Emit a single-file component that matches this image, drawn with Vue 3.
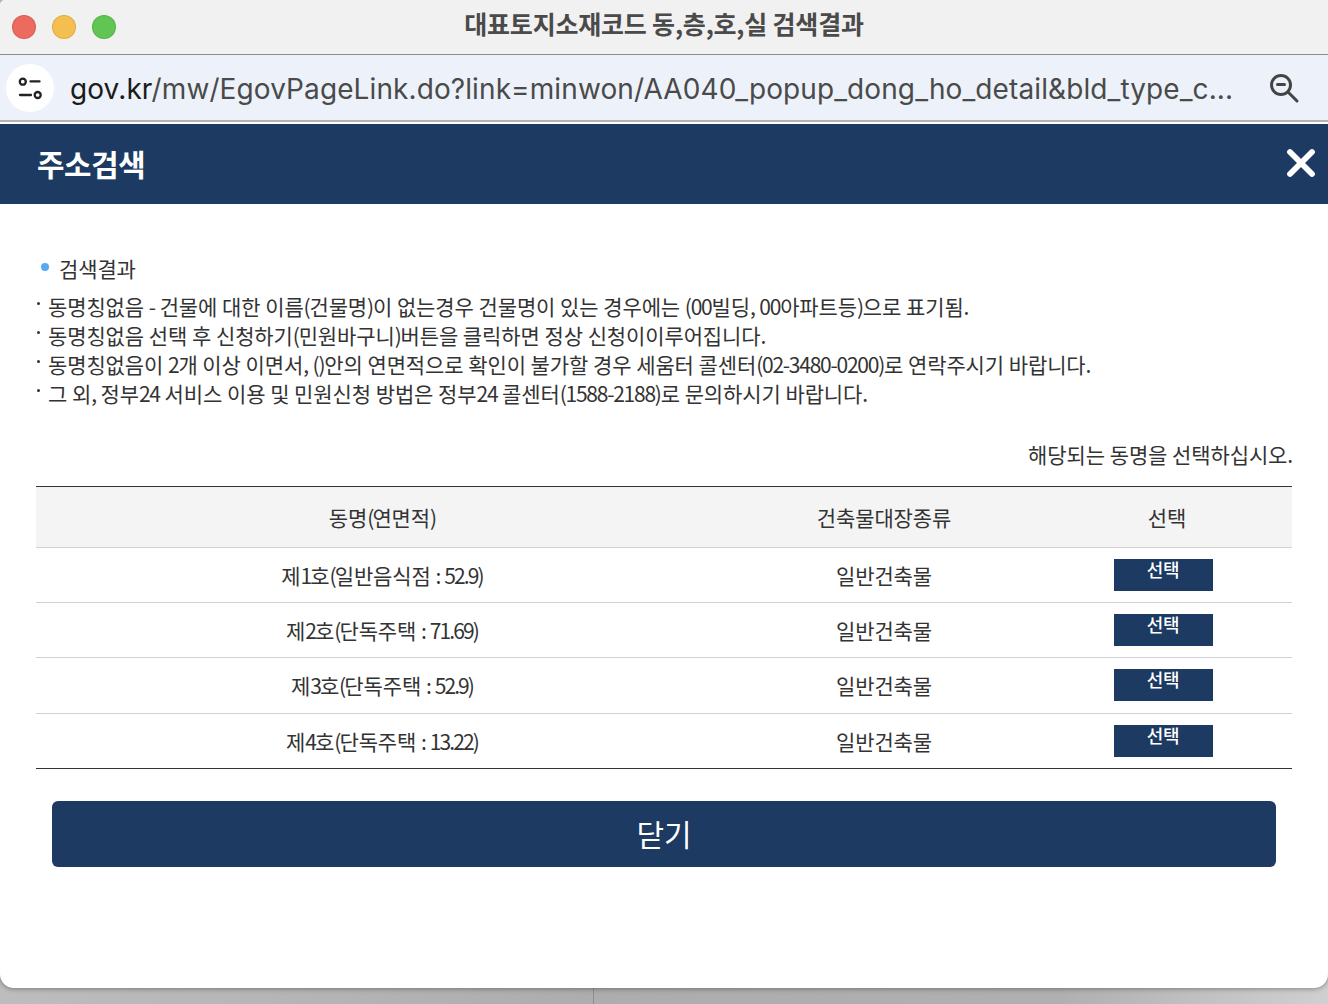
<script setup>
const notes = [
  '동명칭없음 - 건물에 대한 이름(건물명)이 없는경우 건물명이 있는 경우에는 (00빌딩, 00아파트등)으로 표기됨.',
  '동명칭없음 선택 후 신청하기(민원바구니)버튼을 클릭하면 정상 신청이이루어집니다.',
  '동명칭없음이 2개 이상 이면서, ()안의 연면적으로 확인이 불가할 경우 세움터 콜센터(02-3480-0200)로 연락주시기 바랍니다.',
  '그 외, 정부24 서비스 이용 및 민원신청 방법은 정부24 콜센터(1588-2188)로 문의하시기 바랍니다.',
]
const rows = [
  { name: '제1호(일반음식점 : 52.9)', kind: '일반건축물' },
  { name: '제2호(단독주택 : 71.69)', kind: '일반건축물' },
  { name: '제3호(단독주택 : 52.9)', kind: '일반건축물' },
  { name: '제4호(단독주택 : 13.22)', kind: '일반건축물' },
]
// Digits and punctuation are set tighter than Hangul in the original.
const runs = (text) =>
  text.match(/[!-~]+|[^!-~]+/g).map((t) => ({ t, narrow: /^[!-~]/.test(t) }))
</script>

<template>
  <div class="desk">
    <div class="window">
      <div class="titlebar">
        <div class="lights">
          <span class="light red"></span>
          <span class="light yellow"></span>
          <span class="light green"></span>
        </div>
        <div class="wintitle">대표토지소재코드 동,층,호,실 검색결과</div>
      </div>
      <div class="urlbar">
        <span class="tune">
          <svg width="28" height="28" viewBox="0 0 28 28" fill="none" stroke="#222" stroke-width="2.3" stroke-linecap="round">
            <circle cx="6.8" cy="7.7" r="3" />
            <path d="M14.5 7.4h9" />
            <path d="M4 21h11" />
            <circle cx="21.7" cy="21" r="3" />
          </svg>
        </span>
        <div class="url"><span class="host">gov.kr</span>/mw/EgovPageLink.do?link=minwon/AA040_popup_dong_ho_detail&amp;bld_type_c...</div>
        <svg class="zoomout" width="32" height="32" viewBox="0 0 32 32" fill="none" stroke="#444" stroke-width="3" stroke-linecap="round">
          <circle cx="13" cy="12" r="9.5" />
          <path d="M9.5 11.5h7" />
          <path d="M20 19l9 9" />
        </svg>
      </div>
      <div class="seam"></div>
      <header class="head">
        <h1>주소검색</h1>
        <svg class="close" width="30" height="30" viewBox="0 0 30 30" stroke="#fff" stroke-width="5.8" stroke-linecap="round">
          <path d="M4 4l22 22M26 4L4 26" />
        </svg>
      </header>
      <main class="body">
        <h2><i class="dot"></i>검색결과</h2>
        <ul class="notes">
          <li v-for="n in notes" :key="n"><span v-for="(p, i) in runs(n)" :key="i" :class="{ narrow: p.narrow }">{{ p.t }}</span></li>
        </ul>
        <p class="pick">해당되는 동명을 선택하십시오.</p>
        <div class="table">
          <div class="row th">
            <div class="c1"><span v-for="(p, i) in runs('동명(연면적)')" :key="i" :class="{ narrow: p.narrow }">{{ p.t }}</span></div>
            <div class="c2">건축물대장종류</div>
            <div class="c3 c3h">선택</div>
          </div>
          <div v-for="r in rows" :key="r.name" class="row td">
            <div class="c1"><span v-for="(p, i) in runs(r.name)" :key="i" :class="{ narrow: p.narrow }">{{ p.t }}</span></div>
            <div class="c2">{{ r.kind }}</div>
            <div class="c3"><button class="sel">선택</button></div>
          </div>
        </div>
        <button class="closebtn">닫기</button>
      </main>
    </div>
    <div class="below"><span class="divider"></span></div>
  </div>
</template>

<style scoped>
.desk {
  width: 1328px;
  height: 1004px;
  overflow: hidden;
  display: flex;
  flex-direction: column;
  background: linear-gradient(90deg, #bdbdbd 0%, #adadad 45%, #b0b0b0 80%, #d0d0d0 100%);
  font-family: "Noto Sans CJK KR", "Noto Sans", sans-serif;
  color: #333;
}
.window {
  position: relative;
  height: 988px;
  flex: none;
  background: #fff;
  border-radius: 5px 0 14px 14px;
  overflow: hidden;
  box-shadow: 0 1px 5px rgba(0, 0, 0, 0.35);
}
.below {
  flex: 1;
  display: flex;
  padding-left: 593px;
}
.divider {
  width: 1px;
  background: #8f8f8f;
}
.titlebar {
  height: 54px;
  display: flex;
  align-items: center;
  background: #f1f1f1;
  border-bottom: 1px solid #8d8d8d;
  position: relative;
}
.lights {
  display: flex;
  gap: 16px;
  padding-left: 12px;
}
.light {
  width: 24px;
  height: 24px;
  border-radius: 50%;
  box-sizing: border-box;
  border: 1px solid rgba(0, 0, 0, 0.1);
}
.red { background: #ed6a5e; }
.yellow { background: #f5bf4f; }
.green { background: #61c554; }
.wintitle {
  position: absolute;
  left: 0;
  right: 0;
  top: 6px;
  text-align: center;
  font-size: 25px;
  line-height: 34px;
  font-weight: 700;
  color: #4a4a4a;
  letter-spacing: -0.2px;
}
.urlbar {
  height: 65px;
  display: flex;
  align-items: center;
  background: #edf2fa;
  padding-left: 6px;
  font-family: "Inter", "Noto Sans", sans-serif;
}
.tune {
  width: 48px;
  height: 48px;
  border-radius: 50%;
  background: #fff;
  display: flex;
  align-items: center;
  justify-content: center;
  flex: none;
}
.url {
  margin: 2px 0 0 16px;
  font-size: 28px;
  line-height: 36px;
  color: #4a4a4a;
  white-space: nowrap;
  width: 1180px;
  letter-spacing: 0.1px;
}
.host { color: #1b1b1b; }
.zoomout {
  position: absolute;
  left: 1268px;
  top: 73px;
}
.seam {
  height: 4px;
  box-sizing: border-box;
  background: #fff;
  border-top: 2px solid #b4b4b4;
}
.head {
  height: 80px;
  background: #1c3a62;
  display: flex;
  align-items: center;
  justify-content: space-between;
  padding: 0 12px 2px 37px;
  box-sizing: border-box;
}
.head h1 {
  margin: 0;
  font-size: 29.8px;
  line-height: 40px;
  font-weight: 700;
  letter-spacing: -0.3px;
  color: #fff;
}
.close {
  display: block;
}
.body {
  padding: 47px 36px 0;
  word-spacing: 0.2px;
}
h2 {
  margin: 0;
  font-size: 21px;
  line-height: 34px;
  font-weight: 400;
  letter-spacing: -0.12px;
  color: #333;
  display: flex;
  align-items: center;
  padding-left: 5px;
}
.dot {
  width: 8px;
  height: 8px;
  margin: -3px 10px 0 0;
  border-radius: 50%;
  background: #55a9f5;
}
.notes {
  list-style: none;
  margin: 7px 0 0;
  padding: 0;
}
.notes li {
  position: relative;
  padding-left: 12px;
  font-size: 21px;
  line-height: 29px;
  letter-spacing: -0.12px;
  color: #333;
  white-space: nowrap;
}
.notes li::before {
  content: "";
  position: absolute;
  left: 1px;
  top: 10px;
  width: 3px;
  height: 3px;
  border-radius: 50%;
  background: #333;
}
.narrow {
  letter-spacing: -1.25px;
}
.pick {
  margin: 29px -1px 0 0;
  font-size: 21px;
  line-height: 34px;
  letter-spacing: -0.12px;
  text-align: right;
  color: #333;
}
.table {
  margin-top: 15px;
  border-top: 1px solid #333;
  border-bottom: 1px solid #333;
}
.row {
  display: grid;
  grid-template-columns: 692px 312px 252px;
  align-items: center;
  text-align: center;
  font-size: 21px;
  letter-spacing: -0.12px;
}
.row .narrow {
  letter-spacing: -1.9px;
}
.th {
  height: 61px;
  background: #f4f4f4;
  border-bottom: 1px solid #d2d2d2;
  box-sizing: border-box;
}
.td {
  height: 55.2px;
  box-sizing: border-box;
  border-bottom: 1px solid #d2d2d2;
}
.td:last-child {
  height: 54.4px;
  border-bottom: 0;
}
.c3 {
  padding-right: 6px;
  box-sizing: border-box;
  display: flex;
  justify-content: center;
}
.c3h {
  padding-right: 0;
  padding-left: 2px;
}
.sel {
  width: 99px;
  height: 32px;
  border: 0;
  padding: 0 0 11px;
  background: #1c3a62;
  color: #fff;
  font: 500 18px/21px "Noto Sans CJK KR", sans-serif;
  letter-spacing: -0.3px;
}
.closebtn {
  display: block;
  width: 1224px;
  height: 66px;
  margin: 32px 0 0 16px;
  padding: 0 0 1px;
  border: 0;
  border-radius: 6px;
  background: #1c3a62;
  color: #fff;
  font: 400 30px/44px "Noto Sans CJK KR", sans-serif;
}
</style>
